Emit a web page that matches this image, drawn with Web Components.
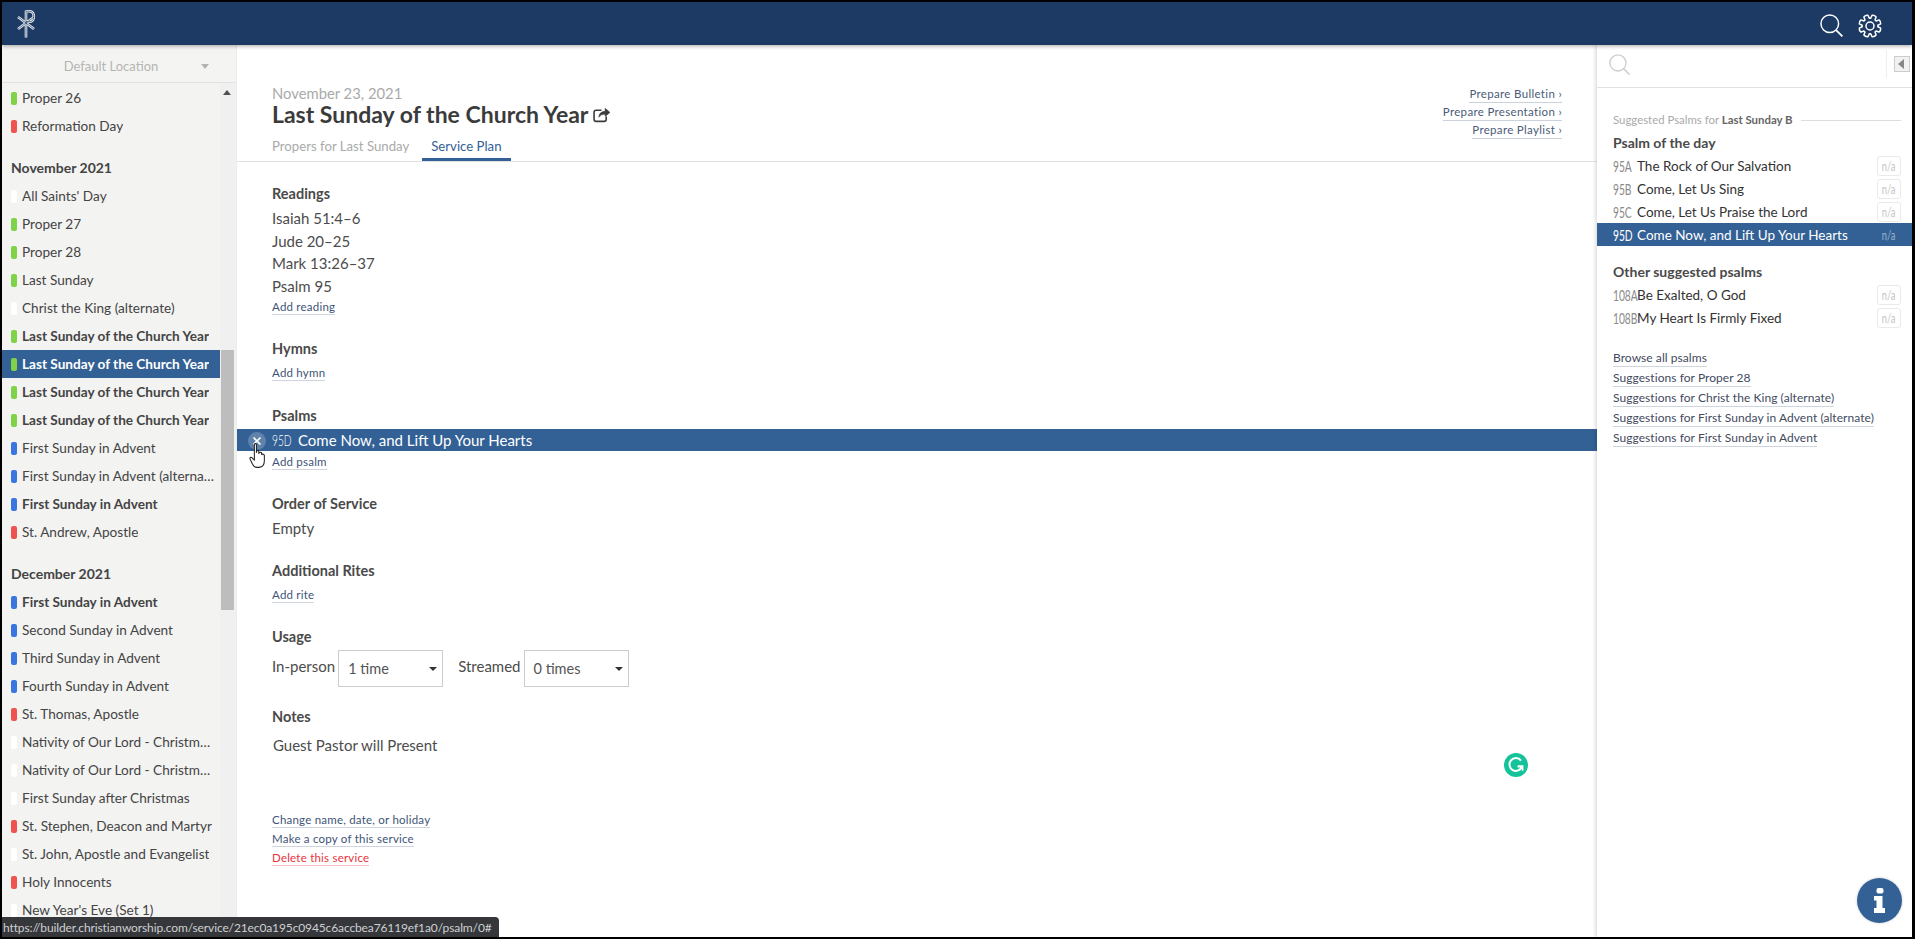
<!DOCTYPE html>
<html>
<head>
<meta charset="utf-8">
<title>Service Plan</title>
<style>
  html, body { margin: 0; height: 100%; overflow: hidden; background: #000; }
  body { font-family: Lato, "Liberation Sans", sans-serif; color: #444; }
</style>
</head>
<body>
<cw-app>
  <cw-header slot="header"></cw-header>
  <cw-sidebar slot="sidebar">
    <cw-row color="green">Proper 26</cw-row>
    <cw-row color="red">Reformation Day</cw-row>
    <cw-month>November 2021</cw-month>
    <cw-row color="white">All Saints' Day</cw-row>
    <cw-row color="green">Proper 27</cw-row>
    <cw-row color="green">Proper 28</cw-row>
    <cw-row color="green">Last Sunday</cw-row>
    <cw-row color="white">Christ the King (alternate)</cw-row>
    <cw-row color="green" bold>Last Sunday of the Church Year</cw-row>
    <cw-row color="green" bold selected>Last Sunday of the Church Year</cw-row>
    <cw-row color="green" bold>Last Sunday of the Church Year</cw-row>
    <cw-row color="green" bold>Last Sunday of the Church Year</cw-row>
    <cw-row color="blue">First Sunday in Advent</cw-row>
    <cw-row color="blue">First Sunday in Advent (alternate)</cw-row>
    <cw-row color="blue" bold>First Sunday in Advent</cw-row>
    <cw-row color="red">St. Andrew, Apostle</cw-row>
    <cw-month>December 2021</cw-month>
    <cw-row color="blue" bold>First Sunday in Advent</cw-row>
    <cw-row color="blue">Second Sunday in Advent</cw-row>
    <cw-row color="blue">Third Sunday in Advent</cw-row>
    <cw-row color="blue">Fourth Sunday in Advent</cw-row>
    <cw-row color="red">St. Thomas, Apostle</cw-row>
    <cw-row color="white">Nativity of Our Lord - Christmas Eve</cw-row>
    <cw-row color="white">Nativity of Our Lord - Christmas Day</cw-row>
    <cw-row color="white">First Sunday after Christmas</cw-row>
    <cw-row color="red">St. Stephen, Deacon and Martyr</cw-row>
    <cw-row color="white">St. John, Apostle and Evangelist</cw-row>
    <cw-row color="red">Holy Innocents</cw-row>
    <cw-row color="white">New Year's Eve (Set 1)</cw-row>
  </cw-sidebar>
  <cw-service slot="main">
    <cw-section title="Readings" style="--top:23px">
      <cw-line>Isaiah 51:4–6</cw-line>
      <cw-line>Jude 20–25</cw-line>
      <cw-line>Mark 13:26–37</cw-line>
      <cw-line>Psalm 95</cw-line>
      <cw-link>Add reading</cw-link>
    </cw-section>
    <cw-section title="Hymns" style="--top:24.6px">
      <cw-link>Add hymn</cw-link>
    </cw-section>
    <cw-section title="Psalms" style="--top:26px">
      <cw-picked num="95D">Come Now, and Lift Up Your Hearts</cw-picked>
      <cw-link style="margin-top:4px">Add psalm</cw-link>
    </cw-section>
    <cw-section title="Order of Service" style="--top:25px">
      <cw-line>Empty</cw-line>
    </cw-section>
    <cw-section title="Additional Rites" style="--top:22.4px">
      <cw-link>Add rite</cw-link>
    </cw-section>
    <cw-section title="Usage" style="--top:24.7px">
      <cw-usage></cw-usage>
    </cw-section>
    <cw-section title="Notes" style="--top:21.7px">
      <cw-line style="padding:4px 0 0 1px">Guest Pastor will Present</cw-line>
    </cw-section>
    <cw-actions>
      <cw-link>Change name, date, or holiday</cw-link>
      <cw-link>Make a copy of this service</cw-link>
      <cw-link danger>Delete this service</cw-link>
    </cw-actions>
  </cw-service>
  <cw-suggest slot="aside">
    <cw-psalm-head>Psalm of the day</cw-psalm-head>
    <cw-psalm num="95A">The Rock of Our Salvation</cw-psalm>
    <cw-psalm num="95B">Come, Let Us Sing</cw-psalm>
    <cw-psalm num="95C">Come, Let Us Praise the Lord</cw-psalm>
    <cw-psalm num="95D" selected>Come Now, and Lift Up Your Hearts</cw-psalm>
    <cw-psalm-head style="margin-top:17px">Other suggested psalms</cw-psalm-head>
    <cw-psalm num="108A">Be Exalted, O God</cw-psalm>
    <cw-psalm num="108B">My Heart Is Firmly Fixed</cw-psalm>
    <cw-more>
      <cw-link tone="dark">Browse all psalms</cw-link>
      <cw-link tone="dark">Suggestions for Proper 28</cw-link>
      <cw-link tone="dark">Suggestions for Christ the King (alternate)</cw-link>
      <cw-link tone="dark">Suggestions for First Sunday in Advent (alternate)</cw-link>
      <cw-link tone="dark">Suggestions for First Sunday in Advent</cw-link>
    </cw-more>
  </cw-suggest>
  <cw-overlays slot="overlays"></cw-overlays>
</cw-app>

<script>
(function() {
    // small helper, every element here is just a template plus a shadow root
    function define(name, html, extra) {
        const template = document.createElement('template');
        template.innerHTML = html;
        class Element extends HTMLElement {
            constructor() {
                super();
                this.attachShadow({ mode: "open" }).appendChild(template.content.cloneNode(true));
            }
            connectedCallback() {
                if (extra) extra.call(this, this.shadowRoot);
            }
        }
        customElements.define(name, Element);
    }

    const searchIcon = (size, color) => `
        <svg width="${size}" height="${size}" viewBox="0 0 24 24" fill="none" stroke="${color}" stroke-width="1.5">
            <circle cx="10.2" cy="10.2" r="9.2"/><path d="M16.8 16.8 L23.4 23.4" stroke-width="1.8"/>
        </svg>`;

    // cog outline, 8 teeth
    function gearPath() {
        let d = '';
        const pt = (r, a) => (12 + r * Math.cos(a)).toFixed(2) + ' ' + (12 + r * Math.sin(a)).toFixed(2);
        for (let i = 0; i < 8; i++) {
            const a = (i * Math.PI) / 4 + Math.PI / 8;
            d += (i ? 'L' : 'M') + pt(7.9, a - 0.3) + ' L' + pt(10.9, a - 0.2) + ' Q' + pt(11.9, a) + ' ' + pt(10.9, a + 0.2) + ' L' + pt(7.9, a + 0.3) + ' ';
        }
        return d + 'Z';
    }

    define('cw-app', `
        <style>
            :host { display: grid; box-sizing: border-box; height: 100vh; padding: 2px 3px 2px 2px;
                    grid-template: 43px 1fr / 234px 1fr 315px; position: relative; overflow: hidden; }
            .head { grid-column: 1 / 4; z-index: 3; box-shadow: 0 1px 4px rgba(0,0,0,.35); }
            .side, .main, .aside { min-height: 0; overflow: hidden; background: #fff; }
            .aside { box-shadow: -2px 0 3px rgba(0,0,0,.12); z-index: 1; }
        </style>
        <div class="head"><slot name="header"></slot></div>
        <div class="side"><slot name="sidebar"></slot></div>
        <div class="main"><slot name="main"></slot></div>
        <div class="aside"><slot name="aside"></slot></div>
        <slot name="overlays"></slot>
    `);

    define('cw-header', `
        <style>
            :host { display: flex; align-items: center; height: 43px; background: #1c3a63; padding: 0 30px 0 14px; box-sizing: border-box; }
            .grow { flex: 1; }
            svg { display: block; }
            .search { margin-right: 15px; margin-top: 4px; }
            .gear { margin-top: 4px; }
        </style>
        <svg width="22" height="28" viewBox="0 0 22 28" fill="none">
            <g stroke="#eef0f3" stroke-width="2.6">
                <path d="M10 0.5 V27.5"/><path d="M2 7 L18 19"/><path d="M2 19 L18 7"/>
                <path d="M10 1.2 H13 Q17.8 1.2 17.8 6.5 Q17.8 11.8 13 11.8 H10"/>
            </g>
            <g stroke="#1c3a63" stroke-width=".7">
                <path d="M10 1 V27"/><path d="M2 7 L18 19"/><path d="M2 19 L18 7"/>
                <path d="M10 1.2 H13 Q17.8 1.2 17.8 6.5 Q17.8 11.8 13 11.8 H10"/>
            </g>
        </svg>
        <span class="grow"></span>
        <span class="search">${searchIcon(23, '#fff')}</span>
        <svg class="gear" width="24" height="24" viewBox="0 0 24 24" fill="none" stroke="#fff" stroke-width="1.5" stroke-linejoin="round">
            <circle cx="12" cy="12" r="4"/>
            <path d="${gearPath()}"/>
        </svg>
    `);

    define('cw-sidebar', `
        <style>
            :host { display: flex; flex-direction: column; height: 100%; background: #f1f1f1; }
            .loc { height: 38px; flex: none; box-sizing: border-box; background: #f4f4f2; border-bottom: 1px solid #e2e2e2;
                   display: flex; align-items: center; justify-content: center; color: #b4b4b4; font-size: 13px;
                   padding: 4px 16px 0 0; position: relative; }
            .loc i { position: absolute; right: 27px; top: 19px; border: 4px solid transparent; border-top: 5px solid #b4b4b4; border-bottom: 0; }
            .body { flex: 1; min-height: 0; display: flex; overflow: hidden; }
            .list { width: 218px; flex: none; background: #f3f3f2; padding-top: 1px; overflow: hidden; }
            .track { width: 14px; background: #f0f0f0; position: relative; padding-top: 267px; box-sizing: border-box; }
            .track b { display: block; height: 260px; width: 13px; margin-left: 1px; background: #bdbdbd; }
            .track i { position: absolute; left: 3px; top: 7px; border: 4px solid transparent; border-bottom: 5px solid #505050; border-top: 0; }
        </style>
        <div class="loc">Default Location<i></i></div>
        <div class="body">
            <div class="list"><slot></slot></div>
            <div class="track"><i></i><b></b></div>
        </div>
    `);

    const bars = { green: '#7ed348', red: '#ef5350', blue: '#3a76e0', white: '#fff' };
    define('cw-row', `
        <style>
            :host { display: flex; align-items: center; height: 28px; padding: 0 5px 0 9px; color: #444; font-size: 13.6px; }
            :host([bold]) { font-weight: 700; }
            :host([selected]) { background: #336196; color: #fff; }
            i { flex: none; width: 6px; height: 13px; border-radius: 2px; margin-right: 5px; }
            span { white-space: nowrap; overflow: hidden; text-overflow: ellipsis; }
        </style>
        <i></i><span><slot></slot></span>
    `, function(root) {
        root.querySelector('i').style.background = bars[this.getAttribute('color')];
    });

    define('cw-month', `
        <style>
            :host { display: block; height: 28px; line-height: 28px; margin-top: 14px; padding-left: 9px; font-weight: 700; font-size: 14px; color: #444; }
        </style>
        <slot></slot>
    `);

    define('cw-service', `
        <style>
            :host { display: block; height: 100%; box-sizing: border-box; border-left: 1px solid #ececec; position: relative; font-size: 14px; color: #444; }
            header { display: flex; justify-content: space-between; padding: 40px 35px 0 35px; height: 117px; box-sizing: border-box; border-bottom: 1px solid #e2e2e2; }
            .date { color: #aaa; font-size: 14.8px; line-height: 17px; }
            h1 { margin: -1px 0 0; font-size: 23px; line-height: 26px; font-weight: 700; color: #3b3b3b; display: flex; align-items: center; gap: 5px; }
            .tabs { display: flex; margin-top: 4px; }
            .tabs span { height: 30px; line-height: 30px; box-sizing: border-box; font-size: 13.2px; color: #aaa; padding-right: 13px; }
            .tabs .on { color: #336196; border-bottom: 3px solid #336196; padding: 0 9px; }
            .prep { display: flex; flex-direction: column; align-items: flex-end; padding-top: 1px; }
            .prep a { font-size: 11.5px; line-height: 15px; height: 18px; color: #4a5b78; letter-spacing: .33px; box-sizing: border-box; }
            .prep a span { border-bottom: 1px solid #ccd2dc; padding-bottom: 1px; display: inline-block; }
        </style>
        <header>
            <div>
                <div class="date">November 23, 2021</div>
                <h1>Last Sunday of the Church Year
                    <svg width="18" height="17" viewBox="0 0 17 16" fill="none" stroke="#3b3b3b" stroke-width="1.5">
                        <path d="M8 4 H3 Q1 4 1 6 V12.5 Q1 14.5 3 14.5 H10.5 Q12.5 14.5 12.5 12.5 V10"/>
                        <path d="M5.5 10.5 Q6 5.2 11.5 5 V2.2 L16 6 11.5 9.8 V7.6 Q7.5 7.6 5.5 10.5 Z" fill="#3b3b3b" stroke-width=".6"/>
                    </svg>
                </h1>
                <div class="tabs"><span>Propers for Last Sunday</span><span class="on">Service Plan</span></div>
            </div>
            <div class="prep">
                <a><span>Prepare Bulletin ›</span></a>
                <a><span>Prepare Presentation ›</span></a>
                <a><span>Prepare Playlist ›</span></a>
            </div>
        </header>
        <slot></slot>
    `);

    define('cw-section', `
        <style>
            :host { display: block; padding-top: var(--top, 24px); }
            h3 { margin: 0 0 4px; padding-left: 35px; font-size: 14.5px; line-height: 18px; font-weight: 700; color: #4a4a4a; }
            ::slotted(cw-line), ::slotted(cw-link) { margin-left: 35px; }
            /* margins collapse with the h3 one, so this is the full gap */
            ::slotted(cw-link:first-child) { margin-top: 8px; }
        </style>
        <h3></h3>
        <slot></slot>
    `, function(root) {
        root.querySelector('h3').textContent = this.getAttribute('title');
    });

    define('cw-line', `
        <style>
            :host { display: block; font-size: 15px; line-height: 22.6px; color: #4c4c4c; }
        </style>
        <slot></slot>
    `);

    define('cw-link', `
        <style>
            :host { display: block; width: fit-content; font-size: 11.5px; line-height: 14px; margin-top: 3px; color: #3d5478; letter-spacing: .22px; border-bottom: 1px solid #cfd5de; }
            :host([danger]) { color: #e8313c; border-bottom-color: #f3c3c6; }
            :host([tone="dark"]) { color: #3f4a5e; font-size: 12px; line-height: 16px; margin-top: 3px; letter-spacing: .06px; }
        </style>
        <slot></slot>
    `);

    const numStyle = `
        .num { display: inline-block; flex: none; font-size: 15.5px; font-weight: 400; transform: scaleX(.66); transform-origin: left center; white-space: nowrap; }
    `;

    define('cw-picked', `
        <style>
            :host { display: flex; align-items: center; height: 22px; background: #336196; color: #fff; padding-left: 35px; font-size: 15px; position: relative; }
            ${numStyle}
            .num { width: 26px; font-weight: 300; }
            .x { position: absolute; left: 11px; top: 3px; width: 18px; height: 18px; border-radius: 50%; background: #5f83ab; display: flex; align-items: center; justify-content: center; }
        </style>
        <span class="x"><svg width="10" height="10" viewBox="0 0 10 10" stroke="#fff" stroke-width="1.7"><path d="M1.5 1.5 L8.5 8.5 M8.5 1.5 L1.5 8.5"/></svg></span>
        <span class="num"></span><span><slot></slot></span>
    `, function(root) {
        root.querySelector('.num').textContent = this.getAttribute('num');
    });

    define('cw-usage', `
        <style>
            :host { display: flex; align-items: flex-start; padding-left: 35px; font-size: 15px; color: #4c4c4c; height: 37px; }
            span { line-height: 33px; margin-right: 3px; }
            span.second { margin-left: 15px; }
        </style>
        <span>In-person</span><cw-select>1 time</cw-select>
        <span class="second">Streamed</span><cw-select>0 times</cw-select>
    `);

    define('cw-select', `
        <style>
            :host { display: flex; align-items: center; box-sizing: border-box; width: 105px; height: 37px; border: 1px solid #ccc; padding: 1px 0 0 9px; font-size: 14.5px; color: #555; position: relative; }
            i { position: absolute; right: 5px; top: 16px; border: 4px solid transparent; border-top: 4px solid #333; border-bottom: 0; }
        </style>
        <slot></slot><i></i>
    `);

    define('cw-actions', `
        <style>
            :host { display: block; padding: 51.7px 0 0 35px; }
            ::slotted(cw-link) { margin-top: 4px; }
        </style>
        <slot></slot>
    `);

    define('cw-suggest', `
        <style>
            :host { display: block; height: 100%; background: #fff; position: relative; font-size: 14px; }
            .bar { height: 42px; border-bottom: 1px solid #e2e2e2; display: flex; align-items: center; padding: 0 2px 0 12px; }
            .bar .grow { flex: 1; align-self: stretch; margin: 5px 7px 9px 0; border-right: 1px solid #eee; }
            .bar svg { display: block; }
            .caps { display: flex; align-items: center; gap: 8px; margin: 24px 11px 0 16px; font-size: 11.4px; line-height: 16px; color: #aaa; white-space: nowrap; }
            .caps b { color: #666; }
            .caps i { flex: 1; border-top: 1px solid #ddd; }
            .toggle { width: 14px; height: 14px; border: 1px solid #ccc; background: #f2f2f2; position: relative; margin-top: -4px; }
            .toggle::after { content: ""; position: absolute; left: 3px; top: 2px; border: 5px solid transparent; border-right: 6px solid #888; border-left: 0; }
        </style>
        <div class="bar">
            <span style="margin-top:-3px">${searchIcon(21, '#ccc')}</span>
            <span class="grow"></span>
            <span class="toggle"></span>
        </div>
        <div class="caps"><span>Suggested Psalms for <b>Last Sunday B</b></span><i></i></div>
        <slot></slot>
    `);

    define('cw-psalm-head', `
        <style>
            :host { display: block; margin: 6px 0 2px 16px; font-size: 14px; line-height: 18px; font-weight: 700; color: #4a4a4a; }
        </style>
        <slot></slot>
    `);

    define('cw-psalm', `
        <style>
            :host { display: flex; align-items: center; height: 23px; padding: 0 11px 0 16px; font-size: 13.5px; color: #333; }
            :host([selected]) { background: #336196; color: #fff; }
            ${numStyle}
            .num { width: 24px; color: #8a8a8a; }
            :host([selected]) .num { color: #fff; }
            .t { flex: 1; white-space: nowrap; }
            .na { flex: none; box-sizing: border-box; width: 24px; height: 20px; border: 1px solid #eaeaea; border-radius: 3px; color: #c4c4c4; font-size: 13px; display: flex; align-items: center; justify-content: center; }
            .na span { display: inline-block; transform: scaleX(.72); }
            :host([selected]) .na { border-color: transparent; color: #9db4cf; }
        </style>
        <span class="num"></span><span class="t"><slot></slot></span><span class="na"><span>n/a</span></span>
    `, function(root) {
        root.querySelector('.num').textContent = this.getAttribute('num');
    });

    define('cw-more', `
        <style>
            :host { display: block; padding: 18px 0 0 16px; }
            ::slotted(cw-link) { margin-top: 3px !important; }
        </style>
        <slot></slot>
    `);

    // everything that floats above the page: tooltip, widgets, mouse pointer
    define('cw-overlays', `
        <style>
            :host { display: contents; }
            .status { position: absolute; left: 2px; bottom: 2px; height: 20px; line-height: 21px; padding: 0 7px 0 1px; background: #35373b; color: #cfd0d2; font-size: 12px; letter-spacing: -.12px; border-radius: 0 4px 0 0; white-space: nowrap; z-index: 5; }
            .g { position: absolute; left: 1504px; top: 753px; width: 24px; height: 24px; border-radius: 50%; background: #15c39a; display: flex; align-items: center; justify-content: center; z-index: 4; }
            .info { position: absolute; left: 1857px; top: 878px; width: 45px; height: 45px; border-radius: 50%; background: #336196; box-shadow: 0 0 3px rgba(0,0,0,.2); display: flex; align-items: center; justify-content: center; z-index: 4; }
            .hand { position: absolute; left: 249px; top: 443px; z-index: 6; }
        </style>
        <div class="g">
            <svg width="16" height="16" viewBox="0 0 16 16" fill="none" stroke="#fff" stroke-width="2">
                <path d="M13 3.6 A6.4 6.4 0 1 0 14 9.4 H9.5"/><path d="M14.6 13.8 V9.2 H10" stroke-width="1.6"/>
            </svg>
        </div>
        <div class="info">
            <svg width="11" height="25" viewBox="0 0 11 25" fill="#fff">
                <rect x="2.5" y="0" width="7" height="5.5" rx="2"/>
                <path d="M0 8 H8.5 V20 H11 V25 H0 V20 H2.5 V12.5 H0 Z"/>
            </svg>
        </div>
        <svg class="hand" width="18" height="25" viewBox="0 0 17 24" fill="#fff" stroke="#222" stroke-width="1" stroke-linejoin="round">
            <path d="M5 1.6 Q5 .6 6 .6 Q7 .6 7 1.6 V9 L7.5 7 Q9 6.8 9.3 8 V10 Q11 8 12 9.5 V11 Q14 10 14.6 12 V17 Q14.6 23 9.5 23.4 H7.5 Q4.5 23.4 3 20 L.7 15 Q.8 13.2 2.6 14 L5 16.5 Z"/>
        </svg>
        <div class="status">https://builder.christianworship.com/service/21ec0a195c0945c6accbea76119ef1a0/psalm/0#</div>
    `);
})();
</script>
</body>
</html>
